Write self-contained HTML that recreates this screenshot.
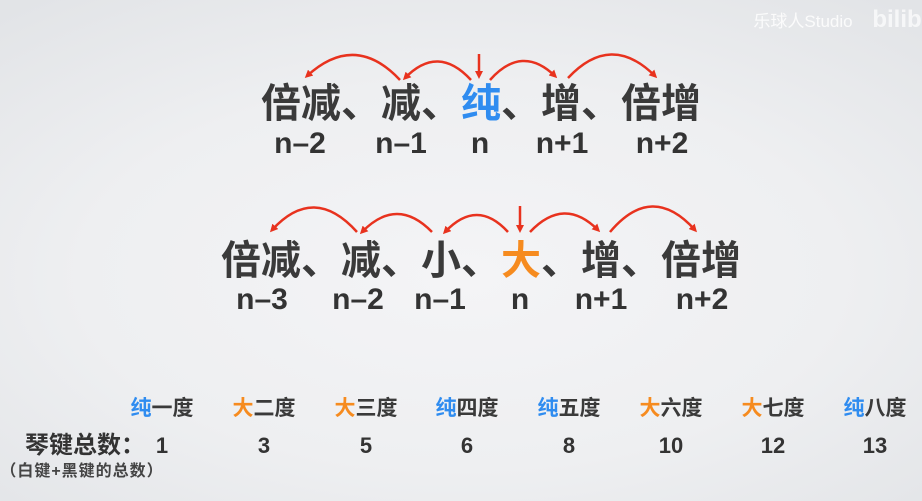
<!DOCTYPE html>
<html><head><meta charset="utf-8"><style>
html,body{margin:0;padding:0}
body{width:922px;height:501px;overflow:hidden;position:relative;
background:radial-gradient(ellipse 75% 70% at 50% 55%,#f4f4f6 0%,#eeeff1 55%,#e2e4e7 100%);
font-family:"Liberation Sans","Noto Sans CJK SC",sans-serif;color:#3a3a3a;font-weight:bold}
.c{position:absolute;transform:translateX(-50%);white-space:nowrap;line-height:1}
.big{font-size:40px}
.lab{font-size:30px;color:#333}
.iv{font-size:21px;color:#3a3a3a}
.num{font-size:22px;color:#333}
.b{color:#2f8cf0}.o{color:#f68b1f}
svg{position:absolute;left:0;top:0}
</style></head><body>
<div class="c" style="left:803px;top:13px;font-size:17px;color:#fff;opacity:.85;font-weight:normal">乐球人Studio</div>
<div class="c" style="left:897px;top:8px;font-size:24px;color:#fff;opacity:.7">bilib</div>

<svg width="922" height="501">
<defs><marker id="a" markerWidth="8" markerHeight="8" refX="5" refY="4" orient="auto" markerUnits="userSpaceOnUse"><path d="M0,0 L8,4 L0,8 Z" fill="#e8321e"/></marker></defs>
<g fill="none" stroke="#e8321e" stroke-width="2.5" marker-end="url(#a)">
<path d="M400,80 Q355,32 307,76"/>
<path d="M471,80 Q438,44 405,78"/>
<path d="M479,54 L479,76"/>
<path d="M490,80 Q522,44 555,76"/>
<path d="M568,78 Q611,32 655,76"/>
<path d="M357,232 Q314,184 272,230"/>
<path d="M432,232 Q397,196 362,232"/>
<path d="M508,232 Q477,198 445,232"/>
<path d="M520,206 L520,230"/>
<path d="M530,232 Q564,196 598,230"/>
<path d="M610,232 Q652,182 695,230"/>
</g></svg>

<div class="c big" style="left:481px;top:84px">倍减、减、<span class="b">纯</span>、增、倍增</div>
<div class="c lab" style="left:300px;top:129px">n–2</div>
<div class="c lab" style="left:401px;top:129px">n–1</div>
<div class="c lab" style="left:480px;top:129px">n</div>
<div class="c lab" style="left:562px;top:129px">n+1</div>
<div class="c lab" style="left:662px;top:129px">n+2</div>

<div class="c big" style="left:481px;top:241px">倍减、减、小、<span class="o">大</span>、增、倍增</div>
<div class="c lab" style="left:262px;top:285px">n–3</div>
<div class="c lab" style="left:358px;top:285px">n–2</div>
<div class="c lab" style="left:440px;top:285px">n–1</div>
<div class="c lab" style="left:520px;top:285px">n</div>
<div class="c lab" style="left:601px;top:285px">n+1</div>
<div class="c lab" style="left:702px;top:285px">n+2</div>

<div class="c iv" style="left:162px;top:398px"><span class="b">纯</span>一度</div>
<div class="c iv" style="left:264px;top:398px"><span class="o">大</span>二度</div>
<div class="c iv" style="left:366px;top:398px"><span class="o">大</span>三度</div>
<div class="c iv" style="left:467px;top:398px"><span class="b">纯</span>四度</div>
<div class="c iv" style="left:569px;top:398px"><span class="b">纯</span>五度</div>
<div class="c iv" style="left:671px;top:398px"><span class="o">大</span>六度</div>
<div class="c iv" style="left:773px;top:398px"><span class="o">大</span>七度</div>
<div class="c iv" style="left:875px;top:398px"><span class="b">纯</span>八度</div>

<div class="c num" style="left:85px;top:434px;font-size:24px">琴键总数：</div>
<div class="c num" style="left:162px;top:435px">1</div>
<div class="c num" style="left:264px;top:435px">3</div>
<div class="c num" style="left:366px;top:435px">5</div>
<div class="c num" style="left:467px;top:435px">6</div>
<div class="c num" style="left:569px;top:435px">8</div>
<div class="c num" style="left:671px;top:435px">10</div>
<div class="c num" style="left:773px;top:435px">12</div>
<div class="c num" style="left:875px;top:435px">13</div>
<div class="c" style="left:82px;top:464px;font-size:16px;color:#444;letter-spacing:1px">（白键+黑键的总数）</div>
</body></html>
